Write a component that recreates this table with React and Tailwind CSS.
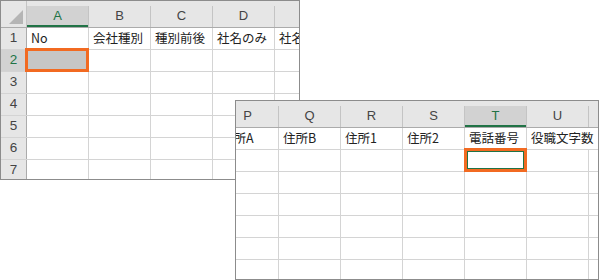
import React from "react";

const cellFont = { fontFamily: '"Noto Sans CJK JP", "Liberation Sans", sans-serif' };

function HeaderCell({ label, selected }) {
  return (
    <div
      className={
        "w-[62px] h-[21px] shrink-0 self-end flex items-center justify-center pb-[1px] border-r border-[#c4c4c4] text-[13px] font-['Liberation_Sans',sans-serif] " +
        (selected
          ? "bg-[#d2d2d2] text-[#217346] shadow-[inset_0_-2px_0_#217346]"
          : "text-[#444444]")
      }
    >
      {label}
    </div>
  );
}

function Cell({ text, children, noRight, fill }) {
  return (
    <div
      className={
        "relative w-[62px] shrink-0 h-full flex items-center pl-[4px] text-[12.5px] leading-none text-[#222222] whitespace-nowrap " +
        (noRight ? "" : "border-r border-[#d4d4d4] ") +
        (fill ? "bg-[#c6c6c6]" : "")
      }
      style={cellFont}
    >
      <span className="pb-[1px]">{text}</span>
      {children}
    </div>
  );
}

function SheetOne() {
  const cols = ["A", "B", "C", "D", "E"];
  const first = ["No", "会社種別", "種別前後", "社名のみ", "社名カナ"];
  return (
    <div className="w-[300px] h-[180px] border border-[#8c8c8c] bg-white overflow-hidden flex flex-col">
      {/* column headings */}
      <div className="flex h-[27px] shrink-0 bg-[#e6e6e6] border-b border-[#ababab]">
        <div className="relative w-[26px] shrink-0 border-r border-[#c4c4c4]">
          <svg width="25" height="26" className="absolute left-0 top-0">
            <polygon points="8,23 22,23 22,9" fill="#b5b5b5" />
          </svg>
        </div>
        {cols.map((c) => (
          <HeaderCell key={c} label={c} selected={c === "A"} />
        ))}
      </div>
      {[1, 2, 3, 4, 5, 6, 7].map((r) => (
        <div key={r} className="flex h-[22px] shrink-0 border-b border-[#d4d4d4]">
          <div
            className={
              "w-[26px] shrink-0 h-full flex items-center justify-center border-r border-[#ababab] text-[13.5px] font-['Liberation_Sans',sans-serif] " +
              (r === 2 ? "bg-[#d2d2d2] text-[#217346]" : "bg-[#e6e6e6] text-[#444444]")
            }
          >
            {r}
          </div>
          {cols.map((c, i) => {
            if (r === 1) return <Cell key={c} text={first[i]} />;
            if (r === 2 && c === "A")
              return (
                <Cell key={c} fill>
                  <div className="absolute left-[-2px] top-[-2px] w-[64px] h-[24px] border-[3px] border-[#f26a21]" />
                </Cell>
              );
            return <Cell key={c} />;
          })}
        </div>
      ))}
    </div>
  );
}

function SheetTwo() {
  const cols = ["P", "Q", "R", "S", "T", "U", "V"];
  const first = ["住所A", "住所B", "住所1", "住所2", "電話番号", "役職文字数", ""];
  return (
    <div className="absolute left-[235px] top-[100px] w-[364px] h-[180px] border border-[#8c8c8c] bg-white overflow-hidden flex flex-col">
      <div className="flex h-[27px] shrink-0 bg-[#e6e6e6] border-b border-[#ababab] ml-[-19px]">
        {cols.map((c) => (
          <HeaderCell key={c} label={c} selected={c === "T"} />
        ))}
      </div>
      {[1, 2, 3, 4, 5, 6, 7].map((r) => (
        <div key={r} className="flex h-[22px] shrink-0 border-b border-[#d4d4d4] ml-[-19px]">
          {cols.map((c, i) => {
            if (r === 1) return <Cell key={c} text={first[i]} noRight={c === "U"} />;
            if (r === 2 && c === "T")
              return (
                <Cell key={c}>
                  <div className="absolute left-[-1px] top-[-2px] w-[63px] h-[24px] border-[3px] border-[#f26a21]">
                    <div className="w-full h-full border border-[#217346]" />
                  </div>
                </Cell>
              );
            return <Cell key={c} />;
          })}
        </div>
      ))}
    </div>
  );
}

export default function App() {
  return (
    <div className="relative w-[600px] h-[280px] bg-white overflow-hidden">
      <SheetOne />
      <SheetTwo />
    </div>
  );
}
